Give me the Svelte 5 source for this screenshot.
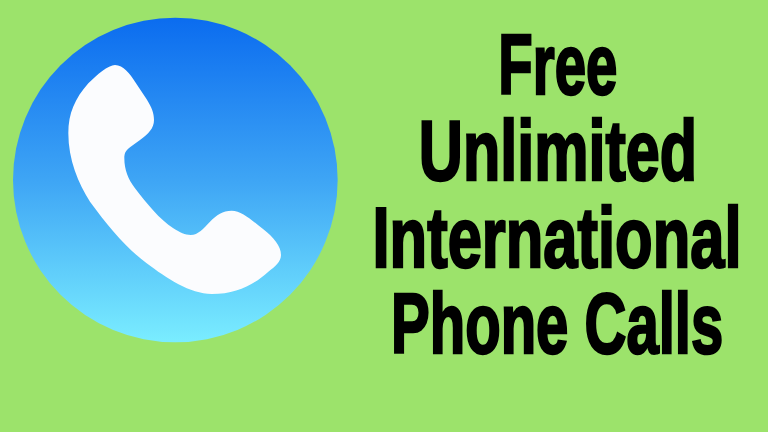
<script>
  const lines = [
    { text: 'Free', cls: 'free' },
    { text: 'Unlimited', cls: 'unlimited' },
    { text: 'International', cls: 'international' },
    { text: 'Phone Calls', cls: 'phone' }
  ]
</script>

<div class="page">
  <svg class="logo" viewBox="0 0 1050 1050" role="img" aria-label="Phone app logo">
    <defs>
      <linearGradient id="disc" x1="0" y1="0" x2="0" y2="1">
        <stop offset="0" stop-color="#0b6cef" />
        <stop offset="0.5" stop-color="#3ea5f5" />
        <stop offset="1" stop-color="#7aedff" />
      </linearGradient>
    </defs>
    <circle cx="526" cy="540" r="487" fill="url(#disc)" />
    <path
      fill="#fbfcfe"
      d="M345 195 C370 195 390 222 405 245 L440 298 C455 322 462 340 462 360 C462 385 445 402 420 420 L392 440 C378 450 373 458 373 475 C373 510 385 538 405 565 C440 610 480 660 520 685 C540 698 555 705 572 705 C595 705 610 685 630 665 C650 645 668 632 695 632 C725 632 755 660 790 688 C820 712 843 738 843 765 C843 785 825 800 805 815 C760 855 710 882 635 882 C570 882 500 835 440 790 C380 745 325 680 270 605 C235 550 205 480 205 400 C205 340 225 295 265 250 C290 225 325 195 345 195 Z"
    />
  </svg>
  <div class="headline">
    {#each lines as line}
      <div class="line {line.cls}">{line.text}</div>
    {/each}
  </div>
</div>

<style>
  :global(body) {
    margin: 0;
    background: #9ce36b;
  }

  .page {
    width: 768px;
    height: 432px;
    display: flex;
    align-items: flex-start;
    overflow: hidden;
    background: #9ce36b;
  }

  .logo {
    width: 350px;
    height: 350px;
    flex: none;
  }

  .headline {
    width: 415px;
    flex: none;
    display: flex;
    flex-direction: column;
    align-items: center;
    padding-top: 21px;
    font-family: "Liberation Sans", Arial, sans-serif;
    font-weight: 700;
    font-size: 86px;
    line-height: 86.4px;
    color: #000;
    white-space: nowrap;
  }

  .line {
    flex: none;
    width: max-content;
    -webkit-text-stroke: 2.5px #000;
  }

  .free {
    transform: scaleX(0.655);
  }

  .unlimited {
    transform: scaleX(0.71);
  }

  .international {
    transform: scaleX(0.715);
  }

  .phone {
    transform: scaleX(0.675);
  }
</style>
